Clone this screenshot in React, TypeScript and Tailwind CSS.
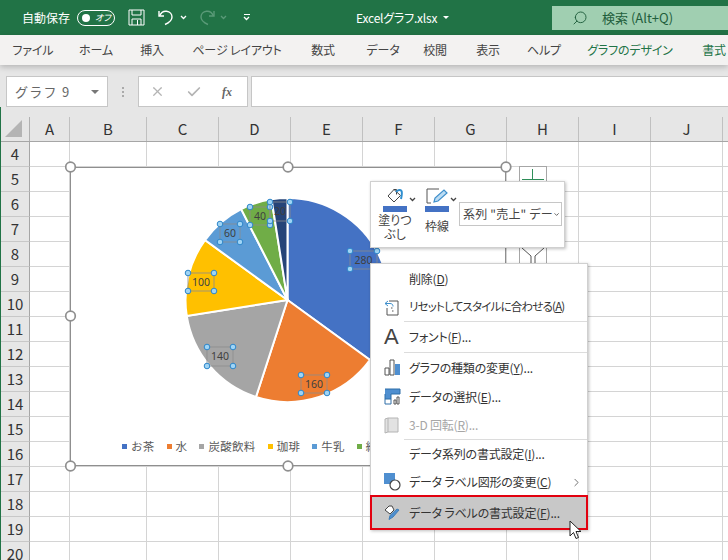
import React from 'react';
import { Search, X, Check, ChevronDown, ChevronRight } from 'lucide-react';

const columns = ['A', 'B', 'C', 'D', 'E', 'F', 'G', 'H', 'I', 'J', ''];
const rows = Array.from({ length: 17 }, (_, i) => i + 4);

const tabs = [
  { label: 'ファイル', w: 'w-[66px]' },
  { label: 'ホーム', w: 'w-[60px]' },
  { label: '挿入', w: 'w-[52px]' },
  { label: 'ページ レイアウト', w: 'w-[118px]' },
  { label: '数式', w: 'w-[54px]' },
  { label: 'データ', w: 'w-[66px]' },
  { label: '校閲', w: 'w-[38px]' },
  { label: '表示', w: 'w-[68px]' },
  { label: 'ヘルプ', w: 'w-[44px]' },
  { label: 'グラフのデザイン', w: 'w-[128px]', green: true },
  { label: '書式', w: 'w-[40px]', green: true },
];

// pie slices in order, clockwise from 12 o'clock
const slices = [
  { value: 280, color: '#4472c4' },
  { value: 160, color: '#ed7d31' },
  { value: 140, color: '#a5a5a5' },
  { value: 100, color: '#ffc000' },
  { value: 60, color: '#5b9bd5' },
  { value: 40, color: '#70ad47' },
  { value: 20, color: '#264478' },
];

const legend = [
  { label: 'お茶', color: 'bg-[#4472c4]' },
  { label: '水', color: 'bg-[#ed7d31]' },
  { label: '炭酸飲料', color: 'bg-[#a5a5a5]' },
  { label: '珈琲', color: 'bg-[#ffc000]' },
  { label: '牛乳', color: 'bg-[#5b9bd5]' },
  { label: '緑茶', color: 'bg-[#70ad47]' },
];

const dataLabels = [
  { text: '280', x: 350, y: 251, w: 27, h: 18 },
  { text: '160', x: 301, y: 375, w: 26, h: 18 },
  { text: '140', x: 207, y: 347, w: 26, h: 19 },
  { text: '100', x: 188, y: 273, w: 26, h: 18 },
  { text: '60', x: 220, y: 224, w: 20, h: 18 },
  { text: '40', x: 250, y: 207, w: 20, h: 18 },
  { text: '20', x: 270, y: 202, w: 20, h: 19 },
];

function slicePath(cx: number, cy: number, r: number, from: number, to: number) {
  const pt = (deg: number) => {
    const a = (deg * Math.PI) / 180;
    return `${cx + r * Math.sin(a)} ${cy - r * Math.cos(a)}`;
  };
  return `M${cx} ${cy} L${pt(from)} A${r} ${r} 0 ${to - from > 180 ? 1 : 0} 1 ${pt(to)} Z`;
}

function PieChart() {
  let angle = 0;
  return (
    <svg viewBox="70 167 436 299" className="absolute left-0 top-0 w-full h-full overflow-visible">
      {slices.map((s) => {
        const from = angle;
        angle += (s.value / 800) * 360;
        return <path key={s.value} d={slicePath(287.5, 300, 102, from, angle)} fill={s.color} stroke="#fff" strokeWidth="2" />;
      })}
      {dataLabels.map((l) => (
        <g key={l.text}>
          <rect x={l.x} y={l.y} width={l.w} height={l.h} fill="none" stroke="#8c8c8c" strokeWidth="0.8" />
          <text
            x={l.x + l.w / 2}
            y={l.y + l.h / 2 + 3.5}
            textAnchor="middle"
            fontSize="10.5"
            fill="#404040"
            fontFamily="'Noto Sans', sans-serif"
          >
            {l.text}
          </text>
          {[
            [l.x, l.y],
            [l.x + l.w, l.y],
            [l.x, l.y + l.h],
            [l.x + l.w, l.y + l.h],
          ].map(([x, y]) => (
            <circle key={`${x}-${y}`} cx={x} cy={y} r="2.8" fill="#9fd4f5" stroke="#2e86c9" strokeWidth="1" />
          ))}
        </g>
      ))}
    </svg>
  );
}

function ChartHandles() {
  const pts = [
    [70.5, 167],
    [288, 167],
    [506, 167],
    [70.5, 316],
    [70.5, 466],
    [288, 466],
    [506, 466],
  ];
  return (
    <svg viewBox="70 167 436 299" className="absolute left-0 top-0 w-full h-full overflow-visible">
      {pts.map(([x, y]) => (
        <circle key={`${x}-${y}`} cx={x} cy={y} r="4.8" fill="#fff" stroke="#8f8f8f" strokeWidth="1.7" />
      ))}
    </svg>
  );
}

function SaveIcon() {
  return (
    <svg width="17" height="17" viewBox="0 0 17 17" fill="none" stroke="#fff" strokeWidth="1">
      <path d="M1 1h15v15H1z" />
      <path d="M4 1v5h9V1M4 16v-6h9v6M9.500 11v5" />
    </svg>
  );
}

function UndoIcon({ faded }: { faded?: boolean }) {
  return (
    <svg
      width="16"
      height="17"
      viewBox="0 0 16 17"
      fill="none"
      stroke={faded ? '#5a9a78' : '#fff'}
      strokeWidth="1.4"
      className={faded ? '-scale-x-100' : ''}
    >
      <path d="M1 2v5h5" />
      <path d="M1.500 7C3 3.500 5.500 2 8.500 2.300c3.500.4 5.500 3 5.500 5.700 0 3-2.500 5.500-7 7.500" />
    </svg>
  );
}

function SmallCaret({ color = '#fff' }: { color?: string }) {
  return (
    <svg width="7" height="5" viewBox="0 0 7 5" fill="none" stroke={color} strokeWidth="1.3">
      <path d="M1 1l2.500 2.500L6 1" />
    </svg>
  );
}

function BucketIcon() {
  return (
    <svg width="20" height="16" viewBox="0 0 20 16" fill="none" stroke="#444" strokeWidth="1">
      <path d="M9 1.500L3 8l6 6 6.500-6.500z" fill="#fff" />
      <path d="M8.500 1.500h3v5" />
      <path d="M11 4c2-2.500 4.500-2.500 5.500-1 .8 1.500.2 5-.5 8" stroke="#2f8fd0" strokeWidth="2" />
    </svg>
  );
}

function TitleBar() {
  return (
    <div className="h-[35px] bg-[#217346] flex items-center text-white shrink-0 relative">
      <span className="ml-[22px] text-[12px] w-[49px] whitespace-nowrap">自動保存</span>
      <div className="ml-[6px] w-[38px] h-[16px] rounded-full border border-white flex items-center pl-[4px]">
        <span className="w-[8px] h-[8px] rounded-full bg-white" />
        <span className="ml-[5px] text-[9px] italic leading-none [font-feature-settings:'palt']">オフ</span>
      </div>
      <div className="ml-[13px]">
        <SaveIcon />
      </div>
      <div className="ml-[13px]">
        <UndoIcon />
      </div>
      <div className="ml-[6px]">
        <SmallCaret />
      </div>
      <div className="ml-[12px]">
        <UndoIcon faded />
      </div>
      <div className="ml-[5px]">
        <SmallCaret color="#5a9a78" />
      </div>
      <div className="ml-[16px] flex flex-col items-center gap-[1px]">
        <span className="w-[6px] h-px bg-white" />
        <SmallCaret />
      </div>
      <span className="ml-[106px] text-[12px] tracking-[-0.2px] whitespace-nowrap [font-feature-settings:'palt']">Excelグラフ.xlsx</span>
      <span className="ml-[6px] w-0 h-0 border-x-[3px] border-x-transparent border-t-[3px] border-t-white" />
      <div className="ml-auto w-[176px] h-[24px] bg-[#a0cfb1] flex items-center text-[#1f5e3c]">
        <Search size={16} strokeWidth={1.4} className="ml-[20px] -scale-x-100" />
        <span className="ml-[14px] text-[13px] whitespace-nowrap">検索 (Alt+Q)</span>
      </div>
    </div>
  );
}

function RibbonTabs() {
  return (
    <div className="h-[30px] bg-[#f3f2f1] flex items-center shrink-0 relative z-10 shadow-[0_2px_6px_rgba(0,0,0,0.22)]">
      {tabs.map((t) => (
        <div
          key={t.label}
          className={`${t.w} shrink-0 text-center text-[12px] tracking-[-0.15px] whitespace-nowrap [font-feature-settings:'palt'] ${
            t.green ? 'text-[#217346]' : 'text-[#444]'
          }`}
        >
          {t.label}
        </div>
      ))}
    </div>
  );
}

function FormulaBar() {
  return (
    <div className="h-[42px] bg-[#e6e6e6] pt-[11px] flex shrink-0">
      <div className="ml-[6px] w-[102px] h-[31px] bg-white border border-[#c6c6c6] flex items-center pl-[8px] pr-[8px] justify-between">
        <span className="text-[13px] text-[#666] tracking-[1.3px]">グラフ 9</span>
        <span className="w-0 h-0 border-x-[4px] border-x-transparent border-t-[4px] border-t-[#777]" />
      </div>
      <div className="w-[30px] flex flex-col items-center justify-center gap-[2px]">
        <span className="w-[2px] h-[2px] bg-[#aaa]" />
        <span className="w-[2px] h-[2px] bg-[#aaa]" />
        <span className="w-[2px] h-[2px] bg-[#aaa]" />
      </div>
      <div className="w-[110px] h-[31px] bg-white border border-[#c6c6c6] flex items-center pl-[11px]">
        <X size={15} strokeWidth={2} className="text-[#b4b4b4]" />
        <Check size={16} strokeWidth={2.6} className="ml-[21px] text-[#b4b4b4]" />
        <span className="ml-[20px] text-[12px] italic font-bold font-['Liberation_Serif',serif] text-[#666]">fx</span>
      </div>
      <div className="ml-[3px] flex-1 h-[31px] bg-white border-y border-l border-[#c6c6c6]" />
    </div>
  );
}

function Sheet() {
  return (
    <div className="flex-1 overflow-hidden border-l border-l-[#217346] bg-white">
      <div className="grid grid-cols-[29px_40px_77px_72px_72px_72px_72px_72px_72px_72px_72px_20px] grid-rows-[35px] auto-rows-[25px]">
        <div className="bg-[#e6e6e6] border-b border-b-[#a6a6a6] flex items-end">
          <div className="h-[24px] flex-1 border-r border-[#b0b0b0] flex items-center justify-center">
            <svg width="18" height="17" viewBox="0 0 18 17" className="ml-[-2px] mt-[-2px]">
              <path d="M17 0v17H0z" fill="#b4b4b4" />
            </svg>
          </div>
        </div>
        {columns.map((c, i) => (
          <div key={i} className="bg-[#e6e6e6] border-b border-b-[#a6a6a6] flex items-end">
            <div className="h-[24px] flex-1 border-r border-[#c0c0c0] flex items-center justify-center text-[15px] text-[#333]">{c}</div>
          </div>
        ))}
        {rows.map((r) => (
          <React.Fragment key={r}>
            <div className="bg-[#e6e6e6] border-r border-r-[#a6a6a6] border-b border-b-[#c8c8c8] flex items-center justify-center text-[15px] text-[#333]">{r}</div>
            {columns.map((c, i) => (
              <div key={i} className="border-r border-b border-[#d4d4d4]" />
            ))}
          </React.Fragment>
        ))}
      </div>
    </div>
  );
}

function Chart() {
  return (
    <div className="absolute left-[70px] top-[167px] w-[436px] h-[299px] bg-white outline -outline-offset-1 outline-[#8f8f8f]">
      <PieChart />
      <div className="absolute left-[52px] top-[271px] flex items-center text-[11.5px] text-[#595959] whitespace-nowrap tracking-[0.3px]">
        {legend.map((l) => (
          <div key={l.label} className="flex items-center mr-[12px]">
            <span className={`w-[5px] h-[5px] mr-[4px] ${l.color}`} />
            {l.label}
          </div>
        ))}
      </div>
      <ChartHandles />
    </div>
  );
}

function ChartButtons() {
  return (
    <>
      <div className="absolute left-[519px] top-[166px] w-[28px] h-[100px] bg-white border border-[#a6a6a6]" />
      <svg width="26" height="20" viewBox="0 0 26 20" className="absolute left-[520px] top-[168px]" fill="none" stroke="#2f8f5a" strokeWidth="1">
        <path d="M12.500 1v10M2 11.500h22" />
      </svg>
      <svg width="26" height="20" viewBox="0 0 26 20" className="absolute left-[520px] top-[247px]" fill="none" stroke="#555" strokeWidth="1">
        <path d="M2 1l9 8v10M24 1l-9 8v10" />
      </svg>
    </>
  );
}

function MiniToolbar() {
  return (
    <div className="absolute left-[370px] top-[181px] w-[195px] h-[67px] bg-white border border-[#d0d0d0] shadow-[1px_1px_3px_rgba(0,0,0,0.25)] flex text-[12px] text-[#444] [font-feature-settings:'palt']">
      <div className="ml-[12px] w-[24px] flex flex-col items-center pt-[6px]">
        <BucketIcon />
        <span className="mt-[2px] w-[24px] h-[6px] shrink-0 bg-[#4472c4]" />
        <span className="leading-[14px] mt-[1px] text-center whitespace-nowrap">塗りつ<br />ぶし</span>
      </div>
      <div className="mt-[15px] ml-[2px]">
        <SmallCaret color="#444" />
      </div>
      <div className="ml-[9px] w-[24px] flex flex-col items-center pt-[6px]">
        <svg width="24" height="16" viewBox="0 0 24 16" fill="none" stroke="#555" strokeWidth="1">
          <path d="M14 1H2v14h4" />
          <path d="M9 14l1-4 9-8 3 3-9 8z" fill="#bcdcf3" stroke="#3f8fcb" strokeWidth="1.2" />
        </svg>
        <span className="mt-[2px] w-[24px] h-[6px] shrink-0 bg-[#4472c4]" />
        <span className="mt-[6px] leading-[15px] whitespace-nowrap">枠線</span>
      </div>
      <div className="mt-[15px] ml-[1px]">
        <SmallCaret color="#444" />
      </div>
      <div className="ml-[2px] mt-[20px] w-[103px] h-[24px] border border-[#c6c6c6] flex items-center pl-[3px] whitespace-nowrap tracking-[0.2px]">
        系列 "売上" デー
        <ChevronDown size={11} strokeWidth={2.4} className="ml-auto mr-[1px] text-[#333]" />
      </div>
    </div>
  );
}

type MenuRow = {
  label: string;
  key?: string;
  tail?: string;
  icon?: React.ReactNode;
  h: string;
  tight?: boolean;
  disabled?: boolean;
  active?: boolean;
  sub?: boolean;
};

const menu: (MenuRow | 'sep')[] = [
  { label: '削除(', key: 'D', tail: ')', h: 'h-[28px]' },
  {
    label: 'リセットしてスタイルに合わせる(',
    key: 'A',
    tail: ')',
    h: 'h-[28px]',
    tight: true,
    icon: (
      <svg width="16" height="17" viewBox="0 0 16 17" fill="none" stroke="#555">
        <path d="M5 2h9v14H3V9" />
        <path d="M7 9h3M8 12h3" strokeDasharray="1.500 1.500" />
        <path d="M4 2L1 4.500 4 7M1 4.500h5c2 0 3 1 3 3" stroke="#3f8fcb" />
      </svg>
    ),
  },
  'sep',
  {
    label: 'フォント(',
    key: 'F',
    tail: ')...',
    h: 'h-[30px]',
    icon: <span className="text-[22px] leading-none text-[#444] font-['Liberation_Sans',sans-serif]">A</span>,
  },
  'sep',
  {
    label: 'グラフの種類の変更(',
    key: 'Y',
    tail: ')...',
    h: 'h-[29px]',
    icon: (
      <svg width="17" height="17" viewBox="0 0 17 17">
        <path d="M1 9h4v7H1z" fill="#fff" stroke="#555" />
        <path d="M6 1h4v15H6z" fill="#fff" stroke="#555" />
        <path d="M11 5h5v11h-5z" fill="#4f8fd0" />
      </svg>
    ),
  },
  {
    label: 'データの選択(',
    key: 'E',
    tail: ')...',
    h: 'h-[29px]',
    icon: (
      <svg width="17" height="17" viewBox="0 0 17 17" fill="none">
        <path d="M1 1h15v5H1zM1 6h6v5H1z" fill="#4f8fd0" />
        <path d="M1 1h15v5M1 6v10h6M7 6v10M1 11h6M7 6h9" stroke="#2f6fa8" />
        <path d="M10 12h2v4h-2zM13 9h2v7h-2z" fill="#fff" stroke="#555" />
      </svg>
    ),
  },
  {
    label: '3-D 回転(',
    key: 'R',
    tail: ')...',
    h: 'h-[28px]',
    disabled: true,
    icon: (
      <svg width="15" height="17" viewBox="0 0 15 17">
        <path d="M1 2l3-1h10v14H4l-3 1z" fill="#e2e2e2" stroke="#b4b4b4" />
        <path d="M4 1v14" stroke="#b4b4b4" />
      </svg>
    ),
  },
  'sep',
  { label: 'データ系列の書式設定(', key: 'I', tail: ')...', h: 'h-[28px]' },
  {
    label: 'データ ラベル図形の変更(',
    key: 'C',
    tail: ')',
    h: 'h-[28px]',
    sub: true,
    icon: (
      <svg width="17" height="18" viewBox="0 0 17 18" fill="none">
        <path d="M0 0h11v11H0z" fill="#4f8fd0" />
        <circle cx="11" cy="12" r="5" fill="#fff" stroke="#444" strokeWidth="1.2" />
      </svg>
    ),
  },
  {
    label: 'データ ラベルの書式設定(',
    key: 'F',
    tail: ')...',
    h: 'h-[33px]',
    active: true,
    icon: (
      <svg width="17" height="16" viewBox="0 0 17 16" fill="none" stroke="#444">
        <path d="M5 1L1 5l5 4 4-4-2-4z" fill="#fff" />
        <path d="M15 5l-6 7-4 2.500 1-4 7-6.500z" fill="#4f8fd0" stroke="#3f7fb8" />
      </svg>
    ),
  },
];

function ContextMenu() {
  return (
    <div className="absolute left-[370px] top-[263px] w-[218px] h-[267px] bg-white border border-[#d0d0d0] shadow-[1px_1px_3px_rgba(0,0,0,0.25)] pt-[1px] text-[12px] text-[#333] [font-feature-settings:'palt']">
      {menu.map((m, i) =>
        m === 'sep' ? (
          <div key={i} className="ml-[33px] h-px bg-[#dcdcdc]" />
        ) : (
          <div
            key={i}
            className={`${m.h} flex items-center whitespace-nowrap ${m.disabled ? 'text-[#a6a6a6]' : ''} ${
              m.active ? 'bg-[#c8c8c8] outline-2 -outline-offset-1 outline-[#e2000f]' : ''
            }`}
          >
            <div className="w-[38px] shrink-0 pl-[13px] flex items-center">{m.icon}</div>
            <span className={m.tight ? 'text-[11.5px] tracking-[-0.8px]' : 'tracking-[-0.2px]'}>
              {m.label}
              <span className="underline">{m.key}</span>
              {m.tail}
            </span>
            {m.sub && <ChevronRight size={13} strokeWidth={1.5} className="ml-auto mr-[4px] text-[#555]" />}
          </div>
        ),
      )}
    </div>
  );
}

function Cursor() {
  return (
    <svg width="14" height="21" viewBox="0 0 14 21" className="absolute left-[569px] top-[520px]">
      <path d="M1 1v15l3.500-3.500 2.500 6 2.500-1-2.500-6h5z" fill="#fff" stroke="#222" strokeWidth="1" />
    </svg>
  );
}

export default function App() {
  return (
    <div className="relative w-[728px] h-[560px] overflow-hidden flex flex-col bg-white font-['Noto_Sans_CJK_JP','Noto_Sans',sans-serif]">
      <TitleBar />
      <RibbonTabs />
      <FormulaBar />
      <Sheet />
      <ChartButtons />
      <Chart />
      <MiniToolbar />
      <ContextMenu />
      <Cursor />
    </div>
  );
}
